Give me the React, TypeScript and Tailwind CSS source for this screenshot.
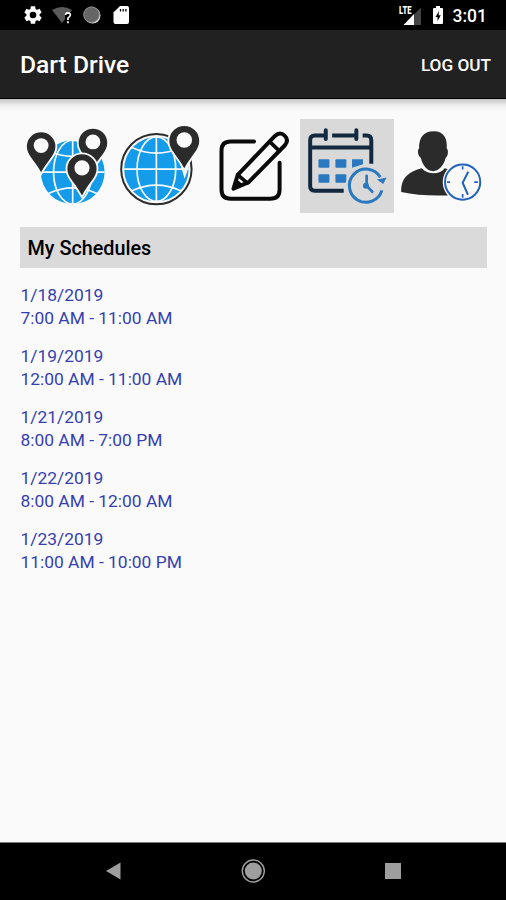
import type { ReactNode } from "react";

const SCHEDULES = [
  { date: "1/18/2019", time: "7:00 AM - 11:00 AM" },
  { date: "1/19/2019", time: "12:00 AM - 11:00 AM" },
  { date: "1/21/2019", time: "8:00 AM - 7:00 PM" },
  { date: "1/22/2019", time: "8:00 AM - 12:00 AM" },
  { date: "1/23/2019", time: "11:00 AM - 10:00 PM" },
];

function Pin({ x, y, r, tip }: { x: number; y: number; r: number; tip: number }) {
  const d = `M${x - r} ${y} A${r} ${r} 0 0 1 ${x + r} ${y} C${x + r} ${y + r * 0.6} ${x + r * 0.5} ${y + r * 0.9} ${x} ${tip} C${x - r * 0.5} ${y + r * 0.9} ${x - r} ${y + r * 0.6} ${x - r} ${y}Z`;
  return (
    <g>
      <path d={d} fill="#2b2b2b" stroke="#fafafa" strokeWidth="11" paintOrder="stroke" />
      <circle cx={x} cy={y - 3} r={r * 0.52} fill="#fafafa" />
    </g>
  );
}

function Globe({ x, y, r }: { x: number; y: number; r: number }) {
  return (
    <g fill="none" stroke="#fafafa" strokeWidth="5">
      <circle cx={x} cy={y} r={r} fill="#149ceb" stroke="none" />
      <ellipse cx={x} cy={y} rx={r * 0.6} ry={r} />
      <path d={`M${x} ${y - r}V${y + r}M${x - r} ${y}H${x + r}`} />
      <path d={`M${x - r * 0.76} ${y - r * 0.67}Q${x} ${y - r * 0.32} ${x + r * 0.76} ${y - r * 0.67}`} />
      <path d={`M${x - r * 0.76} ${y + r * 0.67}Q${x} ${y + r * 0.32} ${x + r * 0.76} ${y + r * 0.67}`} />
    </g>
  );
}

function AllLocationsIcon() {
  return (
    <svg viewBox="15 12 280 283" className="h-full w-full">
      <Globe x={173} y={172} r={96} />
      <Pin x={78} y={95} r={43} tip={172} />
      <Pin x={234} y={84} r={43} tip={160} />
      <Pin x={201} y={162} r={44} tip={242} />
    </svg>
  );
}

function LocationIcon() {
  return (
    <svg viewBox="10 12 280 283" className="h-full w-full">
      <circle cx="140" cy="163" r="106" fill="#fafafa" stroke="#2b2b2b" strokeWidth="6" />
      <Globe x={140} y={163} r={97} />
      <path d="M205 125L225 192L250 120Z" fill="#fafafa" />
      <Pin x={224} y={78} r={45} tip={160} />
    </svg>
  );
}

function EditIcon() {
  return (
    <svg
      viewBox="5 12 280 283"
      className="h-full w-full"
      fill="none"
      stroke="#0a0a0a"
      strokeWidth="12"
      strokeLinecap="round"
      strokeLinejoin="round"
    >
      <path d="M146 80H76Q48 80 48 108V224Q48 252 76 252H195Q223 252 223 224V144" />
      <path d="M97 180L209 63Q224 49 238 62Q252 75 239 91L130 202L84 222Z" />
      <path d="M193 80L222 108M97 180L126 205" strokeWidth="11" />
      <path d="M84 222L91 195L112 212Z" fill="#0a0a0a" strokeWidth="6" />
    </svg>
  );
}

function ScheduleIcon() {
  return (
    <svg viewBox="7 12 280 283" className="h-full w-full" fill="none">
      <g stroke="#13293f" strokeWidth="12">
        <path d="M138 228H51Q37 228 37 214V76Q37 62 51 62H84M103 62H177M195 62H207Q221 62 221 76V147M37 98H221" />
        <path d="M84 46V72M176 46V72" strokeLinecap="round" />
      </g>
      <g fill="#2a78bf">
        <rect x="62" y="133" width="33" height="26" rx="3" />
        <rect x="113" y="133" width="33" height="26" rx="3" />
        <path d="M163 133H196V148L163 159Z" />
        <rect x="62" y="178" width="33" height="26" rx="3" />
        <rect x="113" y="178" width="33" height="26" rx="3" />
      </g>
      <circle cx="205" cy="212" r="61" fill="#d9d9d9" />
      <path d="M253 227A50 50 0 1 1 248 187" stroke="#2a78bf" strokeWidth="9" />
      <path d="M238 194L267 188L257 208Z" fill="#2a78bf" />
      <path d="M207 183V213L224 231" stroke="#2a78bf" strokeWidth="8" strokeLinecap="round" />
      <circle cx="205" cy="213" r="9" fill="#2a78bf" />
    </svg>
  );
}

function DriverTimeIcon() {
  return (
    <svg viewBox="-1 12 280 283" className="h-full w-full" fill="none">
      <path
        d="M20 232C20 190 38 172 82 160C99 180 137 180 151 160C175 166 190 174 197 190L160 242C110 244 60 241 20 232Z"
        fill="#2b2b2b"
      />
      <path
        d="M118 49C149 49 160 72 157 101C163 104 162 124 154 129C148 154 132 169 116 169C99 169 85 154 79 129C70 124 68 104 74 101C73 70 86 49 118 49Z"
        fill="#2b2b2b"
      />
      <circle cx="205" cy="202" r="60" fill="#fafafa" />
      <circle cx="205" cy="202" r="53" stroke="#2262bd" strokeWidth="6" />
      <path
        d="M205 154V164M205 238V249M158 202H167M240 202H251"
        stroke="#2262bd"
        strokeWidth="5"
      />
      <path d="M222 171L205 204L221 240" stroke="#2262bd" strokeWidth="6" />
    </svg>
  );
}

function Tab({ active = false, children }: { active?: boolean; children: ReactNode }) {
  return (
    <button className={active ? "h-[94px] flex-1 bg-[#d9d9d9]" : "h-[94px] flex-1"}>
      {children}
    </button>
  );
}

function StatusBar() {
  return (
    <div className="flex h-[30px] items-center justify-between bg-black pr-[19px] pl-[22px] text-white">
      <div className="flex items-center gap-2">
        <svg viewBox="0 0 24 24" className="h-[22px] w-[22px]" fill="white">
          <path d="M19.14 12.94c.04-.3.06-.61.06-.94s-.02-.64-.07-.94l2.03-1.58a.49.49 0 0 0 .12-.61l-1.92-3.32a.49.49 0 0 0-.59-.22l-2.39.96a7 7 0 0 0-1.62-.94l-.36-2.54A.48.48 0 0 0 13.92 2.4h-3.84a.48.48 0 0 0-.48.41l-.36 2.54c-.59.24-1.13.57-1.62.94l-2.39-.96a.48.48 0 0 0-.59.22L2.72 8.87c-.12.21-.07.47.12.61l2.03 1.58c-.05.3-.07.62-.07.94s.02.64.07.94l-2.03 1.58a.49.49 0 0 0-.12.61l1.92 3.32c.12.22.37.29.59.22l2.39-.96c.5.38 1.03.7 1.62.94l.36 2.54c.05.24.24.41.48.41h3.84c.24 0 .44-.17.47-.41l.36-2.54a7 7 0 0 0 1.62-.94l2.39.96c.22.08.47 0 .59-.22l1.92-3.32a.49.49 0 0 0-.12-.61l-2.01-1.58ZM12 15.6a3.6 3.6 0 1 1 0-7.2 3.6 3.6 0 0 1 0 7.2Z" />
        </svg>
        <svg viewBox="0 0 22 20" className="h-5 w-[22px]">
          <path d="M0 5Q10 -1 20 5L10 18Z" fill="#5a5a5a" />
          <path d="M13 8H19.500V20H13Z" fill="black" />
          <path d="M13.500 10Q13.700 7.800 16 7.800Q18.500 8 18.300 10.200Q18 11.800 16 13V15M16 16.300V18.200" fill="none" stroke="white" strokeWidth="1.700" />
        </svg>
        <svg viewBox="0 0 20 20" className="h-5 w-5">
          <circle cx="10.500" cy="10.500" r="8" fill="#e0e0e0" />
          <circle cx="9.500" cy="9.700" r="8" fill="#666" />
          <circle cx="9.500" cy="9.700" r="7.800" fill="none" stroke="#999" strokeWidth="0.800" />
        </svg>
        <svg viewBox="0 0 18 20" className="ml-[3px] h-5 w-[18px]">
          <path d="M7 1H14Q16 1 16 3V17Q16 19 14 19H2.500Q.5 19 .5 17V7.500Z" fill="white" />
          <path d="M7.500 4V6.500M10.200 4V6.500M12.900 4V6.500" stroke="black" strokeWidth="1.300" />
        </svg>
      </div>
      <div className="flex items-center">
        <svg viewBox="0 0 24 20" className="h-5 w-6">
          <path d="M22 2.500V20H4.500Z" fill="#444" />
          <path d="M15 9V20H4.500Z" fill="white" />
          <path d="M0 0H13V10.500H0Z" fill="black" />
          <text x="0" y="9.300" fontSize="10.500" fontWeight="900" fill="white" textLength="12.500" lengthAdjust="spacingAndGlyphs">
            LTE
          </text>
        </svg>
        <svg viewBox="0 0 12 20" className="ml-[9px] h-5 w-3">
          <path d="M4 1H8V3H10Q11 3 11 4V18Q11 19 10 19H2Q1 19 1 18V4Q1 3 2 3H4Z" fill="white" />
          <path d="M7 6L3.500 12H5.500V16L8.800 10.200H6.600Z" fill="black" />
        </svg>
        <span className="mt-[3px] ml-[9px] text-[17.5px] leading-none font-medium">3:01</span>
      </div>
    </div>
  );
}

function NavBar() {
  return (
    <div className="flex h-[58px] items-center justify-between border-t border-[#777] bg-black pr-[105px] pb-0.5 pl-[105px]">
      <svg viewBox="0 0 16 18" className="h-[18px] w-4">
        <path d="M1 9L15.500 .5V17.500Z" fill="#9e9e9e" />
      </svg>
      <svg viewBox="0 0 24 24" className="h-6 w-6">
        <circle cx="12.300" cy="12" r="11" fill="none" stroke="#9e9e9e" strokeWidth="1.400" />
        <circle cx="12.300" cy="12" r="8.500" fill="#9e9e9e" />
      </svg>
      <div className="h-4 w-4 bg-[#9e9e9e]" />
    </div>
  );
}

export default function App() {
  return (
    <div className="flex h-[900px] w-[506px] flex-col bg-[#fafafa] font-[Roboto,sans-serif]">
      <StatusBar />
      <header className="flex h-[69px] items-center justify-between border-b border-black bg-[#212121] pr-[15px] pl-5 text-white">
        <h1 className="pt-[3px] text-[24.6px] font-medium">Dart Drive</h1>
        <button className="pt-[3px] text-[17.2px] font-medium">LOG OUT</button>
      </header>
      <div className="h-3 bg-gradient-to-b from-[#c4c4c4] via-[#ececec] to-[#fafafa]" />
      <main className="flex-1 px-5 pt-2">
        <nav className="-mr-px flex">
          <Tab>
            <AllLocationsIcon />
          </Tab>
          <Tab>
            <LocationIcon />
          </Tab>
          <Tab>
            <EditIcon />
          </Tab>
          <Tab active>
            <ScheduleIcon />
          </Tab>
          <Tab>
            <DriverTimeIcon />
          </Tab>
        </nav>
        <h2 className="mt-[14px] -mr-px flex h-[41px] items-center bg-[#dadada] pt-[3px] pl-[7.5px] text-[19.8px] font-medium text-black">
          My Schedules
        </h2>
        <ul className="mt-4 flex flex-col gap-[14.9px] pl-[0.5px] text-[17.4px] leading-[23px] text-[#353fb0]">
          {SCHEDULES.map((schedule) => (
            <li key={schedule.date}>
              <p>{schedule.date}</p>
              <p>{schedule.time}</p>
            </li>
          ))}
        </ul>
      </main>
      <NavBar />
    </div>
  );
}
